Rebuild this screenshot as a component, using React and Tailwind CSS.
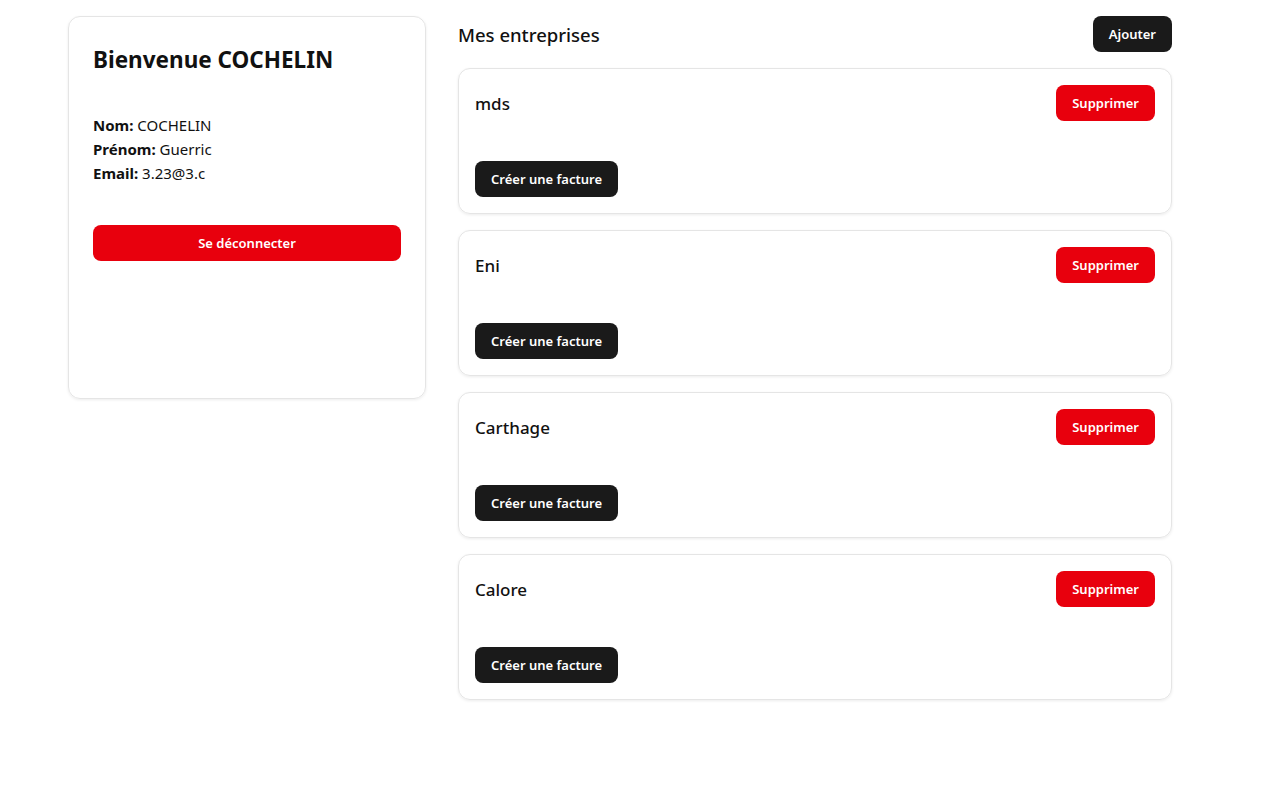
export default function App() {
  const companies = ['mds', 'Eni', 'Carthage', 'Calore'];

  return (
    <div className="min-h-screen bg-white text-[#111] font-['Noto_Sans',sans-serif]">
      <div className="pl-[68px] pt-4 w-[1172px] grid grid-cols-[358px_1fr] gap-8 items-start">
        <div className="h-[383px] rounded-xl border border-[#e5e5e5] shadow-[0_1px_3px_rgba(0,0,0,0.08)] px-6 pt-6">
          <h1 className="mt-[3px] text-[22.5px] leading-8 font-bold">Bienvenue COCHELIN</h1>
          <div className="mt-[37px] text-[15px] leading-6">
            <p><span className="font-bold">Nom:</span> COCHELIN</p>
            <p><span className="font-bold">Prénom:</span> Guerric</p>
            <p><span className="font-bold">Email:</span> 3.23@3.c</p>
          </div>
          <button className="mt-10 w-full h-9 pt-px rounded-lg bg-[#e8000d] text-white text-[13px] font-semibold">
            Se déconnecter
          </button>
        </div>

        <div>
          <div className="flex items-center justify-between h-9 mb-4">
            <h2 className="pt-px text-[18.5px] font-medium">Mes entreprises</h2>
            <button className="h-9 px-4 pt-px rounded-lg bg-[#1a1a1a] text-white text-[13px] font-semibold">
              Ajouter
            </button>
          </div>
          <div className="flex flex-col gap-4">
            {companies.map(name => (
              <div
                key={name}
                className="rounded-xl border border-[#e5e5e5] shadow-[0_1px_3px_rgba(0,0,0,0.08)] p-4"
              >
                <div className="flex items-center justify-between">
                  <span className="pt-px text-[17px] font-medium">{name}</span>
                  <button className="h-9 px-4 pt-px rounded-lg bg-[#e8000d] text-white text-[13px] font-semibold">
                    Supprimer
                  </button>
                </div>
                <button className="mt-10 h-9 px-4 pt-px rounded-lg bg-[#1a1a1a] text-white text-[13px] font-semibold">
                  Créer une facture
                </button>
              </div>
            ))}
          </div>
        </div>
      </div>
    </div>
  );
}
